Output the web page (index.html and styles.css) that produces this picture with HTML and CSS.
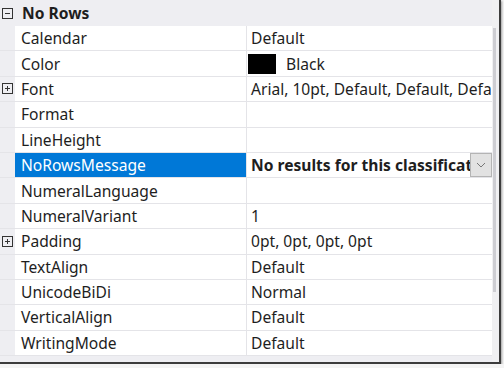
FILE: index.html
```html
<!doctype html>
<html lang="en">
<head>
  <meta charset="utf-8">
  <title>Properties - No Rows</title>
  <link rel="stylesheet" href="styles.css">
</head>
<body>

<div class="window">
  <div class="grid">
    <div class="category">
      <span class="expander"><svg viewBox="0 0 11 11" width="11" height="11"><rect x="0.5" y="0.5" width="10" height="10" fill="none" stroke="#333"/><path d="M3 5.5h5" stroke="#333"/></svg></span>
      <span class="category-name">No Rows</span>
    </div>

    <div class="row">
      <span class="expander"></span>
      <span class="name">Calendar</span>
      <span class="value">Default</span>
    </div>
    <div class="row">
      <span class="expander"></span>
      <span class="name">Color</span>
      <span class="value"><i class="swatch"></i>Black</span>
    </div>
    <div class="row">
      <span class="expander"><svg viewBox="0 0 11 11" width="11" height="11"><rect x="0.5" y="0.5" width="10" height="10" fill="none" stroke="#333"/><path d="M3 5.5h5M5.5 3v5" stroke="#333"/></svg></span>
      <span class="name">Font</span>
      <span class="value">Arial, 10pt, Default, Default, Default</span>
    </div>
    <div class="row">
      <span class="expander"></span>
      <span class="name">Format</span>
      <span class="value"></span>
    </div>
    <div class="row">
      <span class="expander"></span>
      <span class="name">LineHeight</span>
      <span class="value"></span>
    </div>
    <div class="row selected">
      <span class="expander"></span>
      <span class="name">NoRowsMessage</span>
      <span class="value editing"><b class="edit-text">No results for this classification</b><span class="dropdown"><svg viewBox="0 0 10 6" width="10" height="6"><path d="M1 1l4 4 4-4" fill="none" stroke="#777"/></svg></span></span>
    </div>
    <div class="row">
      <span class="expander"></span>
      <span class="name">NumeralLanguage</span>
      <span class="value"></span>
    </div>
    <div class="row">
      <span class="expander"></span>
      <span class="name">NumeralVariant</span>
      <span class="value">1</span>
    </div>
    <div class="row">
      <span class="expander"><svg viewBox="0 0 11 11" width="11" height="11"><rect x="0.5" y="0.5" width="10" height="10" fill="none" stroke="#333"/><path d="M3 5.5h5M5.5 3v5" stroke="#333"/></svg></span>
      <span class="name">Padding</span>
      <span class="value">0pt, 0pt, 0pt, 0pt</span>
    </div>
    <div class="row">
      <span class="expander"></span>
      <span class="name">TextAlign</span>
      <span class="value">Default</span>
    </div>
    <div class="row">
      <span class="expander"></span>
      <span class="name">UnicodeBiDi</span>
      <span class="value">Normal</span>
    </div>
    <div class="row">
      <span class="expander"></span>
      <span class="name">VerticalAlign</span>
      <span class="value">Default</span>
    </div>
    <div class="row">
      <span class="expander"></span>
      <span class="name">WritingMode</span>
      <span class="value">Default</span>
    </div>

    <div class="category">
      <span class="expander"><svg viewBox="0 0 11 11" width="11" height="11"><rect x="0.5" y="0.5" width="10" height="10" fill="none" stroke="#333"/><path d="M3 5.5h5" stroke="#333"/></svg></span>
      <span class="category-name">Other</span>
    </div>
  </div>
  <div class="scrollbar"><div class="thumb"></div></div>
</div>

</body>
</html>
```
FILE: styles.css
```css
:root {
  --gutter-color: #eeeef2;
  --line-color: #e4e4e8;
  --text-color: #1e1e1e;
  --select-color: #0078d7;
  --row-height: 25.4px;
}
html,
body {
  margin: 0;
  background: #f4f4f4;
}
body {
  font-family: "Noto Sans", "Open Sans", sans-serif;
  font-size: 15.6px;
  color: var(--text-color);
}
.window {
  display: flex;
  width: 499px;
  height: 362px;
  border-right: 2px solid #3c3c3c;
  border-bottom: 2px solid #3c3c3c;
  background: var(--gutter-color);
  box-shadow: 1px 1px 2px rgba(0, 0, 0, .35);
  overflow: hidden;
}
.grid {
  flex: 1;
  overflow: hidden;
}
.category,
.row {
  display: grid;
  grid-template-columns: 15px 232px 1fr;
  align-items: center;
}
.category {
  height: 26px;
}
.category-name {
  grid-column: 2 / 4;
  padding-left: 7px;
  font-weight: bold;
}
.expander {
  display: flex;
  justify-content: center;
  align-items: center;
  height: 100%;
}
.row {
  box-sizing: border-box;
  height: var(--row-height);
  border-bottom: 1px solid var(--line-color);
}
.row > .name,
.row > .value {
  display: flex;
  align-items: center;
  height: 100%;
  background: #fff;
  white-space: nowrap;
  overflow: hidden;
}
.name {
  padding-left: 6px;
  border-right: 1px solid var(--line-color);
}
.value {
  padding-left: 4px;
}
.editing {
  padding-right: 0;
}
.edit-text {
  flex: 1;
  min-width: 0;
  overflow: hidden;
}
.selected .name {
  background: var(--select-color);
  color: #fff;
}
.swatch {
  display: inline-block;
  width: 28px;
  height: 20px;
  margin: 0 10px 0 -3px;
  background: #000;
}
.dropdown {
  flex: none;
  align-self: stretch;
  width: 22px;
  display: flex;
  justify-content: center;
  align-items: center;
  background: #e2e2e2;
  border: 1px solid #b4b4b4;
  box-sizing: border-box;
}
.scrollbar {
  width: 7px;
  background: #f0f0f2;
  padding: 28px 0 0 1px;
  box-sizing: border-box;
}
.thumb {
  width: 3px;
  height: 264px;
  background: #cdcdd2;
}
```
